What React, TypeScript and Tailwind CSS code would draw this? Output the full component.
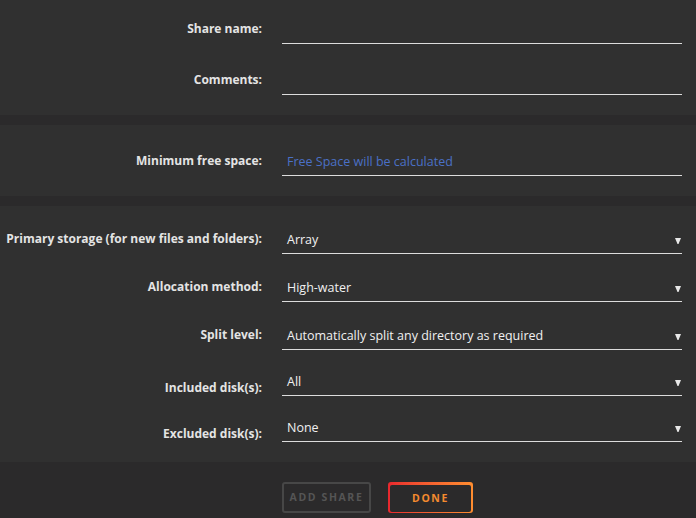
const font = { fontFamily: '"Open Sans", "Noto Sans", sans-serif' };

type RowProps = {
  label: string;
  value?: string;
  select?: boolean;
  blue?: boolean;
  bottom?: boolean;
};

const Caret = () => (
  <svg width="6" height="6" viewBox="0 0 6 6" className="mt-[1px]">
    <polygon points="0,0 6,0 3.5,6 2.5,6" fill="#e8e8e8" />
  </svg>
);

const Row = ({ label, value, select, blue, bottom }: RowProps) => (
  <div className={`flex ${bottom ? "items-end" : "items-center"}`}>
    <div className="w-[262px] shrink-0 whitespace-nowrap text-right text-[12px] leading-4 font-bold text-[#e4e4e4]">
      {label}
    </div>
    <div className="ml-5 flex h-[30px] w-[400px] items-center justify-between border-b border-[#dcdcdc] pt-[3px] pl-[5px] pr-[1px]">
      <span className={`text-[12.5px] ${blue ? "text-[#4b70c6]" : "text-[#f0f0f0]"}`}>{value}</span>
      {select && <Caret />}
    </div>
  </div>
);

const Band = () => <div className="h-[10px] bg-[#2b2a2b]" />;

export default function App() {
  return (
    <div className="min-h-[518px] w-[696px] bg-[#303030]" style={font}>
      <div className="flex flex-col gap-[21px] pt-[14px] pb-[20px]">
        <Row label="Share name:" />
        <Row label="Comments:" />
      </div>
      <Band />
      <div className="pt-[21px] pb-[20px]">
        <Row label="Minimum free space:" value="Free Space will be calculated" blue />
      </div>
      <Band />
      <div className="flex flex-col pt-[18px] pb-[20px]">
        <Row label="Primary storage (for new files and folders):" value="Array" select />
        <div className="h-[18px]" />
        <Row label="Allocation method:" value="High-water" select />
        <div className="h-[18px]" />
        <Row label="Split level:" value="Automatically split any directory as required" select />
        <div className="h-[16px]" />
        <Row label="Included disk(s):" value="All" select bottom />
        <div className="h-[16px]" />
        <Row label="Excluded disk(s):" value="None" select bottom />
      </div>
      <div className="flex h-[56px] gap-[17px] bg-[#2b2a2b] pt-[20px] pl-[282px]">
        <button className="h-[31px] w-[89px] rounded-[3px] border-2 border-[#474747] text-[10.5px] font-bold tracking-[1.6px] text-[#555555]">
          ADD SHARE
        </button>
        <div className="h-[31px] w-[85px] rounded-[3px] bg-gradient-to-r from-[#e8262e] to-[#ff8d30] p-[2px]">
          <button className="h-full w-full rounded-[2px] bg-[#2b2a2b] text-[10.5px] font-bold tracking-[1.6px] text-[#f58a2f]">
            DONE
          </button>
        </div>
      </div>
    </div>
  );
}
